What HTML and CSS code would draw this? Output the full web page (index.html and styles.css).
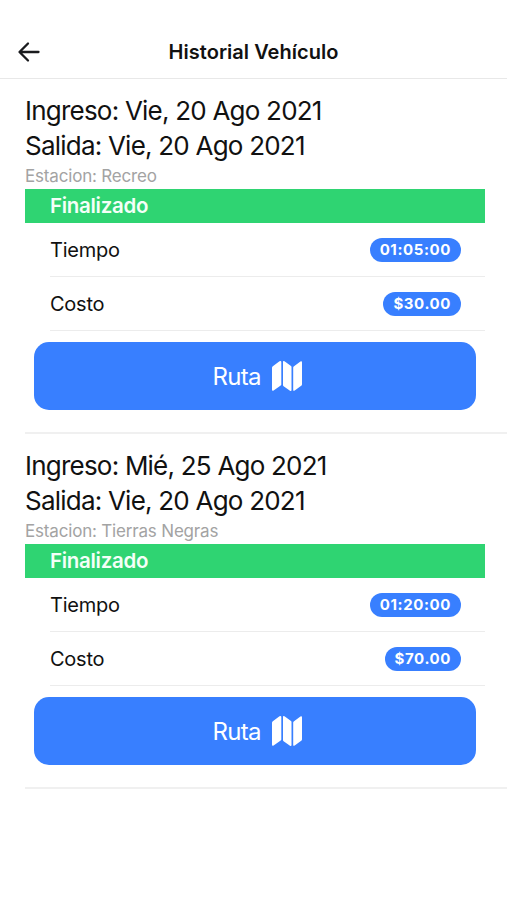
FILE: index.html
```html
<!DOCTYPE html>
<html lang="es">
<head>
<meta charset="utf-8">
<title>Historial Vehículo</title>
<link rel="stylesheet" href="styles.css">
</head>
<body>
<header class="toolbar">
  <svg class="back" viewBox="0 0 24 24"><path d="M11 3.500 2.500 12l8.500 8.500M3 12h18.500"/></svg>
  <h1 class="title">Historial Vehículo</h1>
</header>
<main>
  <article class="visit">
    <h2 class="date">Ingreso: Vie, 20 Ago 2021</h2>
    <h2 class="date">Salida: Vie, 20 Ago 2021</h2>
    <p class="station">Estacion: Recreo</p>
    <div class="status">Finalizado</div>
    <div class="row"><span>Tiempo</span><span class="badge">01:05:00</span></div>
    <div class="row"><span>Costo</span><span class="badge">$30.00</span></div>
    <button class="route"><span>Ruta</span>
      <svg class="map" viewBox="0 0 32 32"><path d="M1 7.800Q1 6.800 1.800 6.200L8.500 1.300Q10.300 .600 10.300 2v22.500q0 .700-.600 1.100L2.600 30.400Q1 31.300 1 29.500ZM12 2q0-1.600 1.500-.700l6.500 4.700q.500.400.500 1V30q0 1.500-1.500.700l-6.400-4.500q-.600-.400-.600-1.200ZM22.200 7.500q0-.700.500-1.100l6.700-4.800Q31 .700 31 2.500v21.700q0 1-.800 1.600L23.700 30.500q-1.500.800-1.500-.600Z"/></svg>
    </button>
  </article>
  <article class="visit">
    <h2 class="date">Ingreso: Mié, 25 Ago 2021</h2>
    <h2 class="date">Salida: Vie, 20 Ago 2021</h2>
    <p class="station">Estacion: Tierras Negras</p>
    <div class="status">Finalizado</div>
    <div class="row"><span>Tiempo</span><span class="badge">01:20:00</span></div>
    <div class="row"><span>Costo</span><span class="badge">$70.00</span></div>
    <button class="route"><span>Ruta</span>
      <svg class="map" viewBox="0 0 32 32"><path d="M1 7.800Q1 6.800 1.800 6.200L8.500 1.300Q10.300 .600 10.300 2v22.500q0 .700-.600 1.100L2.600 30.400Q1 31.300 1 29.500ZM12 2q0-1.600 1.500-.700l6.500 4.700q.500.400.500 1V30q0 1.500-1.500.700l-6.400-4.500q-.600-.400-.600-1.200ZM22.200 7.500q0-.700.500-1.100l6.700-4.800Q31 .700 31 2.500v21.700q0 1-.800 1.600L23.700 30.500q-1.500.800-1.500-.600Z"/></svg>
    </button>
  </article>
</main>
</body>
</html>
```
FILE: styles.css
```css
* { box-sizing: border-box; }
body {
  margin: 0;
  min-height: 900px;
  background: #fff;
  color: #111;
  font-family: Inter, "Liberation Sans", sans-serif;
}
h1, h2, p { margin: 0; }
.toolbar {
  display: grid;
  grid-template-columns: 24px 1fr 24px;
  align-items: center;
  height: 79px;
  padding: 26px 17px 0;
  border-bottom: 1px solid #e8e8e8;
}
.back {
  width: 24px;
  height: 24px;
  fill: none;
  stroke: #1a1b1e;
  stroke-width: 2.3;
  stroke-linecap: round;
  stroke-linejoin: round;
}
.title {
  text-align: center;
  font-size: 20px;
  font-weight: 600;
  letter-spacing: 0.03px;
}
.visit {
  height: 355px;
  margin-left: 25px;
  padding: 14px 22px 0 0;
  border-bottom: 2px solid #f0f0f0;
}
.date {
  font-size: 26px;
  line-height: 35px;
  font-weight: 400;
  letter-spacing: -0.78px;
  white-space: nowrap;
}
.station {
  height: 26px;
  font-size: 17px;
  line-height: 26px;
  letter-spacing: -0.18px;
  color: #a3a3a3;
}
.status {
  height: 34px;
  padding-left: 25px;
  background: #2fd472;
  color: #f4fff8;
  font-size: 20.5px;
  line-height: 34px;
  font-weight: 600;
  letter-spacing: -0.3px;
}
.row {
  display: flex;
  align-items: center;
  justify-content: space-between;
  height: 54px;
  margin-left: 25px;
  padding-right: 24px;
  border-bottom: 1px solid #ececec;
  font-size: 20px;
  letter-spacing: -0.25px;
}
.badge {
  height: 24px;
  padding: 0 10px;
  border-radius: 12px;
  background: #387fff;
  color: #fff;
  font-size: 15px;
  line-height: 24px;
  font-weight: 700;
  letter-spacing: 0.6px;
}
.route {
  display: flex;
  align-items: center;
  justify-content: center;
  gap: 10px;
  width: 442.5px;
  height: 68px;
  margin: 11px 0 0 8.500px;
  padding: 0 0 0 6px;
  border: 0;
  border-radius: 15px;
  background: #387fff;
  color: #fff;
  font-family: inherit;
  font-size: 24px;
  letter-spacing: -0.7px;
}
.map {
  width: 32px;
  height: 32px;
  fill: #fff;
}
```
